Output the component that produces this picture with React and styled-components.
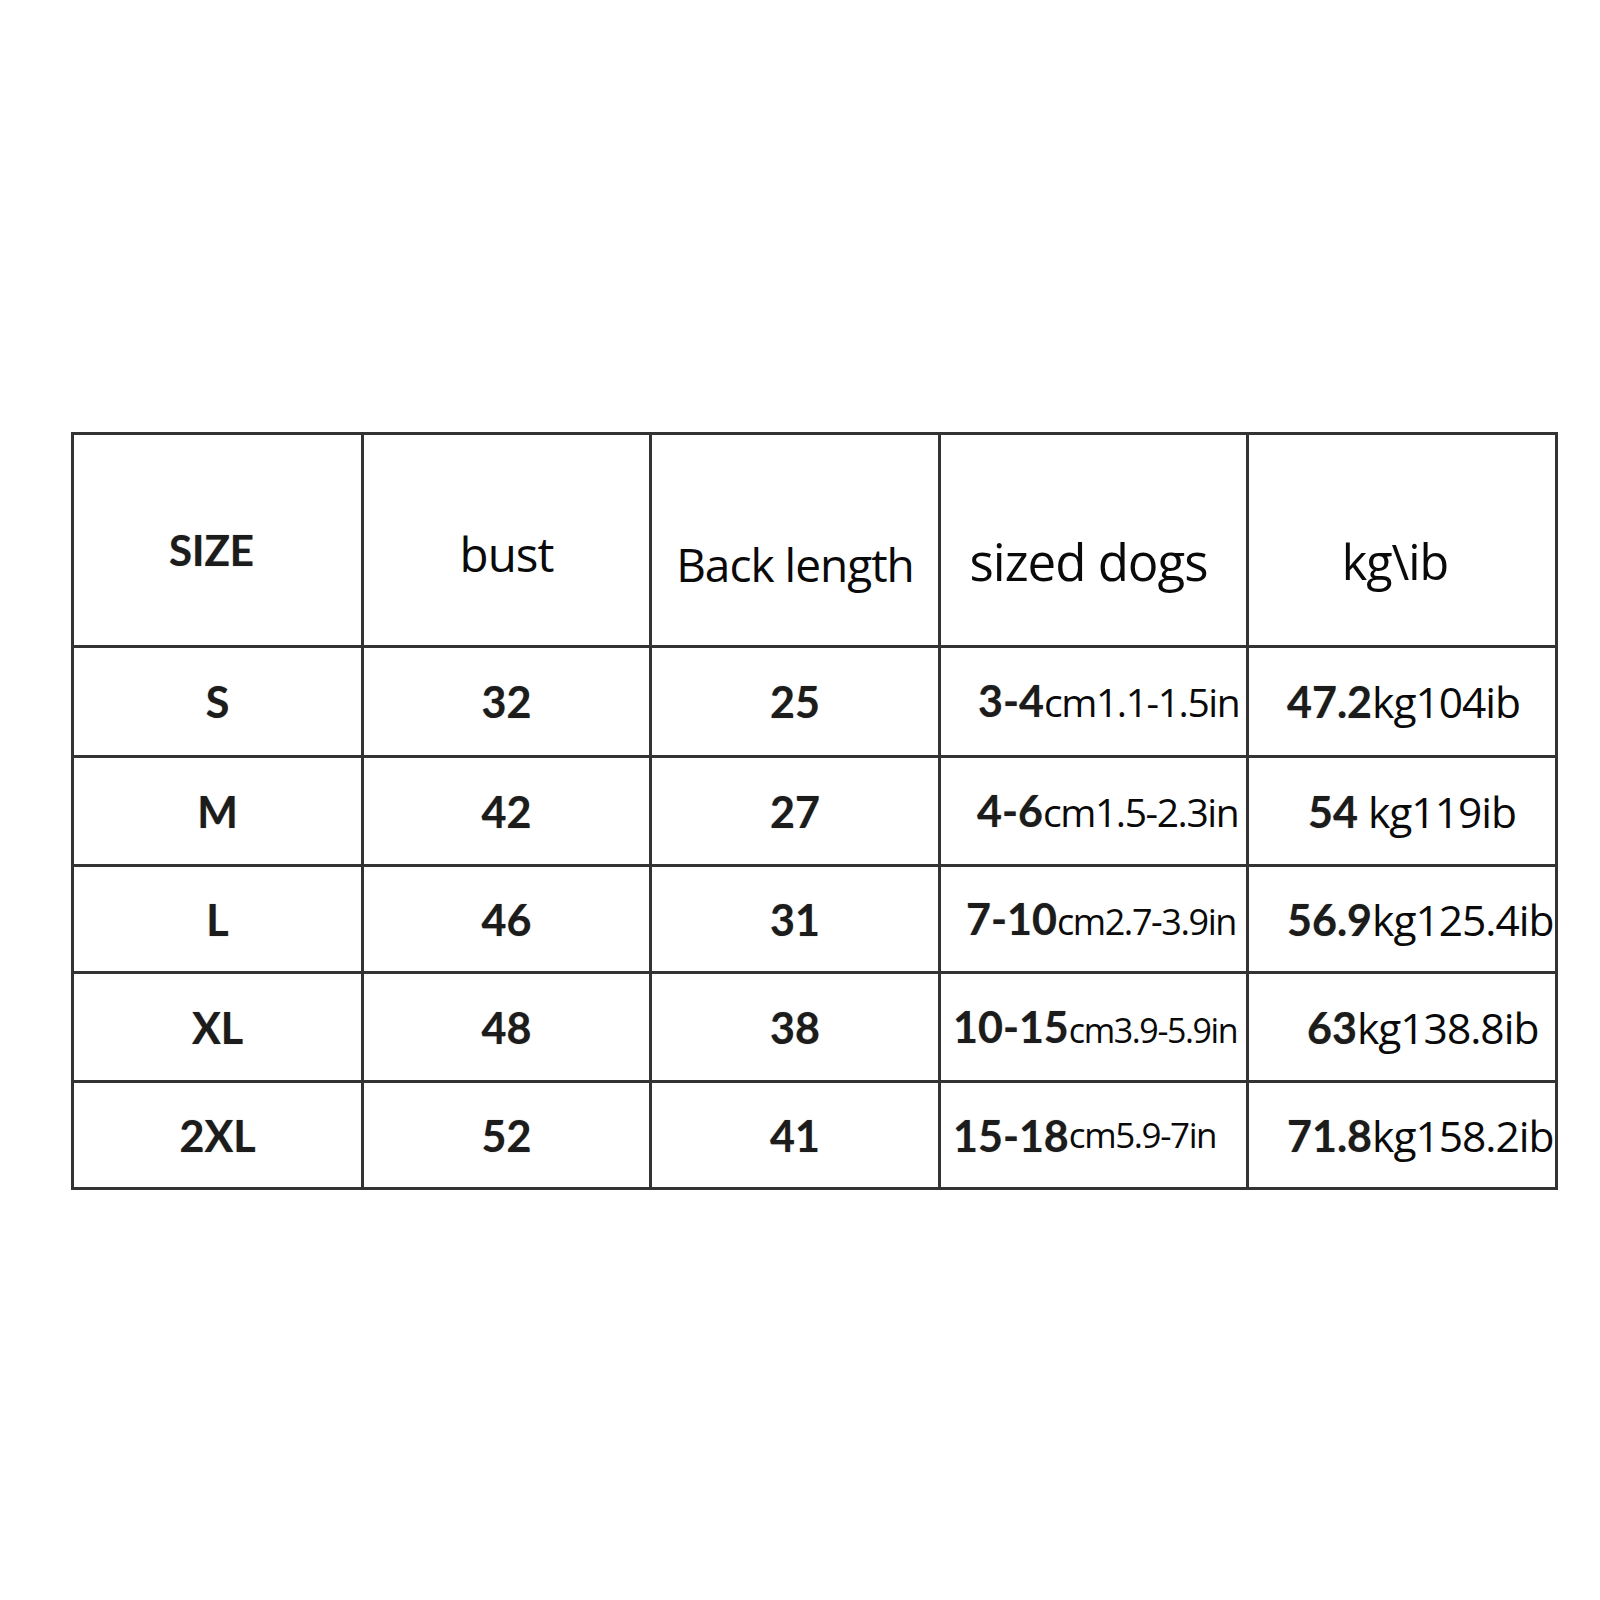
import React from "react";
import styled, { createGlobalStyle } from "styled-components";

const GlobalStyle = createGlobalStyle`
  html, body {
    margin: 0;
    padding: 0;
    background: #ffffff;
  }
  body {
    font-family: "Open Sans", "Noto Sans", sans-serif;
    color: #111;
  }
`;

const Page = styled.div`
  width: 1600px;
  height: 1600px;
  display: flex;
  flex-direction: column;
  padding: 432px 0 0 71px;
  box-sizing: border-box;
`;

const Table = styled.table`
  border-collapse: collapse;
  table-layout: fixed;
  width: 1484px;
  border: 3px solid #333;
`;

const HeadRow = styled.tr`
  height: 213px;
`;

const Row = styled.tr`
  height: ${(p) => p.h}px;
`;

const Cell = styled.td`
  border: 3px solid #333;
  padding: 0;
  text-align: ${(p) => (p.left ? "left" : "center")};
  padding-left: ${(p) => p.pl || 0}px;
  vertical-align: middle;
  white-space: nowrap;
  overflow: hidden;
`;

const HeadCell = styled(Cell)`
  padding-top: ${(p) => p.pt || 20}px;
`;

const Label = styled.span`
  font-family: "Open Sans", "Noto Sans", sans-serif;
  font-size: ${(p) => p.size}px;
  letter-spacing: ${(p) => p.ls ?? -1}px;
  color: #0a0a0a;
  position: relative;
  left: ${(p) => p.dx || 0}px;
`;

const Bold = styled.span`
  font-family: Lato, "Liberation Sans", sans-serif;
  font-weight: 700;
  font-size: ${(p) => p.size || 43}px;
  color: #1c1c1c;
  letter-spacing: 0;
  text-shadow: 0 0 1px rgba(40, 30, 10, 0.5);
`;

const Small = styled.span`
  font-family: "Open Sans", "Noto Sans", sans-serif;
  font-size: ${(p) => p.size || 39}px;
  letter-spacing: -1.4px;
  color: #0a0a0a;
  vertical-align: ${(p) => (p.raise ? "4px" : "baseline")};
`;

const Unit = styled.span`
  font-family: "Open Sans", "Noto Sans", sans-serif;
  font-size: 42.5px;
  letter-spacing: -1px;
  color: #0a0a0a;
`;

const rows = [
  { size: "S", bust: "32", back: "25", dog: "3-4", dogIn: "cm1.1-1.5in", dogPl: 37, kg: "47.2", lb: "kg104ib", kgPl: 38, h: 110 },
  { size: "M", bust: "42", back: "27", dog: "4-6", dogIn: "cm1.5-2.3in", dogPl: 36, kg: "54", lb: " kg119ib", kgPl: 59, h: 109 },
  { size: "L", bust: "46", back: "31", dog: "7-10", dogIn: "cm2.7-3.9in", dogPl: 25, kg: "56.9", lb: "kg125.4ib", kgPl: 38, h: 107, small: 36 },
  { size: "XL", bust: "48", back: "38", dog: "10-15", dogIn: "cm3.9-5.9in", dogPl: 12, kg: "63", lb: "kg138.8ib", kgPl: 58, h: 109, small: 34 },
  { size: "2XL", bust: "52", back: "41", dog: "15-18", dogIn: "cm5.9-7in", dogPl: 12, kg: "71.8", lb: "kg158.2ib", kgPl: 38, h: 107, small: 35, raise: true },
];

export default function App() {
  return (
    <>
      <GlobalStyle />
      <Page>
        <Table>
          <colgroup>
            <col style={{ width: 290 }} />
            <col style={{ width: 288 }} />
            <col style={{ width: 289 }} />
            <col style={{ width: 308 }} />
            <col style={{ width: 309 }} />
          </colgroup>
          <tbody>
            <HeadRow>
              <HeadCell pt={20}>
                <Bold size={42} style={{ position: "relative", left: -6 }}>SIZE</Bold>
              </HeadCell>
              <HeadCell pt={26}>
                <Label size={47.5}>bust</Label>
              </HeadCell>
              <HeadCell pt={48}>
                <Label size={46}>Back length</Label>
              </HeadCell>
              <HeadCell pt={42}>
                <Label size={51} dx={-5}>sized dogs</Label>
              </HeadCell>
              <HeadCell pt={42}>
                <Label size={48.5} dx={-7}>kg\ib</Label>
              </HeadCell>
            </HeadRow>
            {rows.map((r) => (
              <Row key={r.size} h={r.h}>
                <Cell>
                  <Bold>{r.size}</Bold>
                </Cell>
                <Cell>
                  <Bold>{r.bust}</Bold>
                </Cell>
                <Cell>
                  <Bold>{r.back}</Bold>
                </Cell>
                <Cell left pl={r.dogPl}>
                  <Bold>{r.dog}</Bold>
                  <Small size={r.small} raise={r.raise}>{r.dogIn}</Small>
                </Cell>
                <Cell left pl={r.kgPl}>
                  <Bold>{r.kg}</Bold>
                  <Unit>{r.lb}</Unit>
                </Cell>
              </Row>
            ))}
          </tbody>
        </Table>
      </Page>
    </>
  );
}
